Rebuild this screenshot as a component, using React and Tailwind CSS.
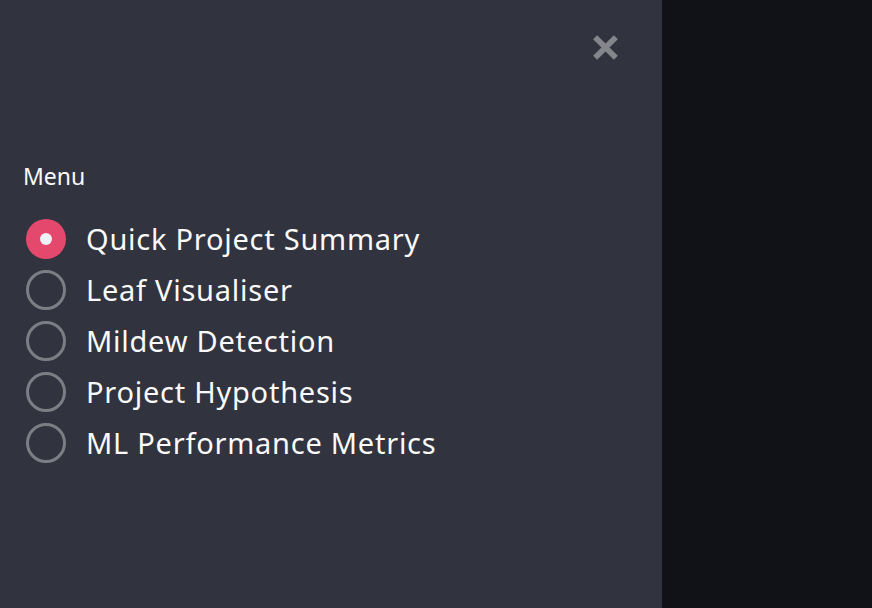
const ITEMS = [
  'Quick Project Summary',
  'Leaf Visualiser',
  'Mildew Detection',
  'Project Hypothesis',
  'ML Performance Metrics',
];

export default function App() {
  const selected = 0;

  return (
    <div className="flex h-[608px] w-[872px] overflow-hidden bg-[#111218] font-['Noto_Sans',sans-serif]">
      {/* Sidebar */}
      <aside className="flex w-[662px] shrink-0 flex-col bg-[#31333f] pl-[23px]">
        <div className="flex justify-end pr-[42px] pt-[33px]">
          <button className="h-[29px] w-[29px] text-[#85868c]">
            <svg viewBox="0 0 28 28" width="29" height="29">
              <path d="M4 4 L24 24 M24 4 L4 24" stroke="currentColor" strokeWidth="5.5" strokeLinecap="butt" />
            </svg>
          </button>
        </div>

        <p className="mt-[98px] text-[23px] leading-[32px] text-[#fafafa]">Menu</p>

        <div className="ml-[3px] mt-[21px] flex flex-col">
          {ITEMS.map((item, i) => (
            <label key={item} className="flex h-[51px] items-center gap-[20px]">
              {i === selected ? (
                <span className="flex h-[40px] w-[40px] items-center justify-center rounded-full bg-[#e5486d]">
                  <span className="h-[12px] w-[12px] rounded-full bg-[#eef0f6]" />
                </span>
              ) : (
                <span className="h-[40px] w-[40px] rounded-full border-[3px] border-[#7c7e86]" />
              )}
              <span className="text-[29px] leading-[36px] tracking-[0.75px] text-[#fafafa]">{item}</span>
            </label>
          ))}
        </div>
      </aside>

      {/* Main */}
      <main className="flex-1" />
    </div>
  );
}
